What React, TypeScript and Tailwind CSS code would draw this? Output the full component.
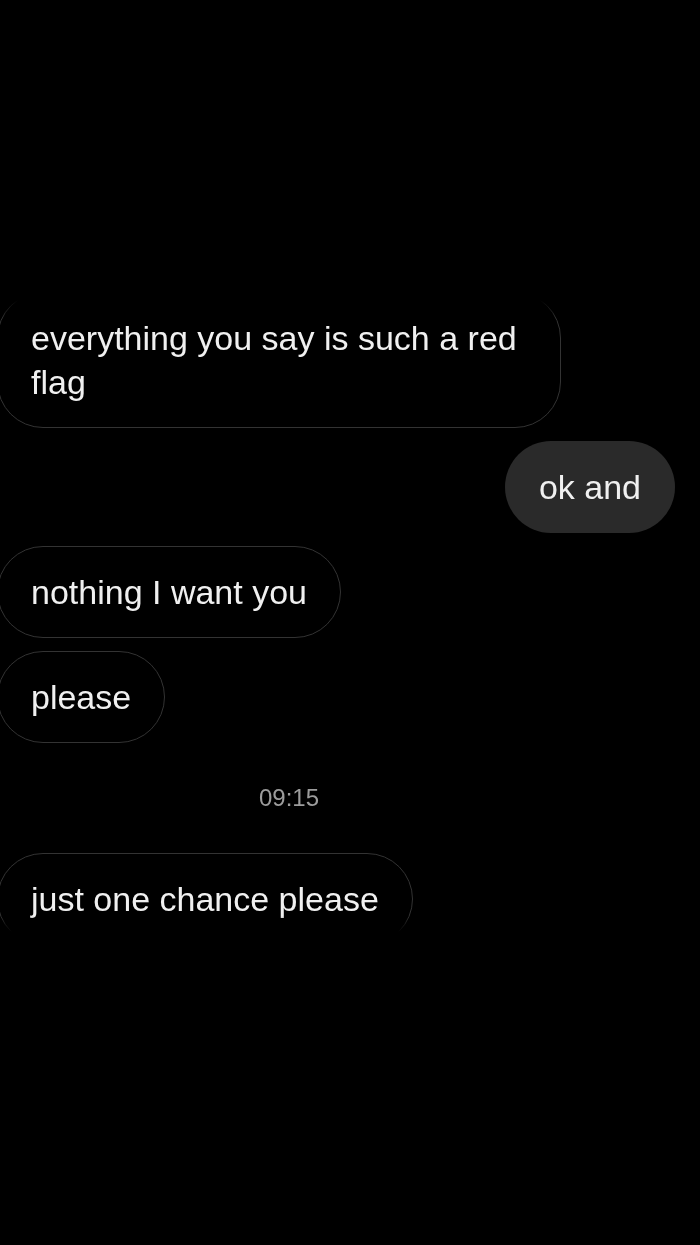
export default function App() {
    const font = { fontFamily: "'Liberation Sans', Arial, sans-serif" };

    return (
        <div className="w-[700px] h-[1245px] bg-black overflow-hidden" style={font}>
            {/* visible chat window */}
            <div className="mt-[300px] h-[632px] overflow-hidden [mask-image:linear-gradient(to_bottom,transparent_0px,black_18px,black_calc(100%-16px),transparent_100%)]">
                <div className="-mt-[8px] flex flex-col gap-[13px] text-[34px] leading-[44px] text-[#f0f0f0]">
                    <div className="-ml-[3px] self-start w-[564px] rounded-[46px] border border-[#333333] px-[33px] py-[23px]">
                        everything you say is such a red flag
                    </div>

                    <div className="self-end mr-[25px] rounded-full bg-[#2a2a2a] px-[34px] py-[24px]">
                        ok and
                    </div>

                    <div className="-ml-[3px] self-start rounded-full border border-[#333333] px-[33px] py-[23px]">
                        nothing I want you
                    </div>

                    <div className="-ml-[3px] self-start rounded-full border border-[#333333] px-[33px] py-[23px]">
                        please
                    </div>

                    <div className="w-[578px] flex justify-center my-[30px] text-[24px] leading-[24px] text-[#9c9c9c]">
                        09:15
                    </div>

                    <div className="-ml-[3px] self-start rounded-full border border-[#333333] px-[33px] py-[23px]">
                        just one chance please
                    </div>
                </div>
            </div>
        </div>
    );
}
